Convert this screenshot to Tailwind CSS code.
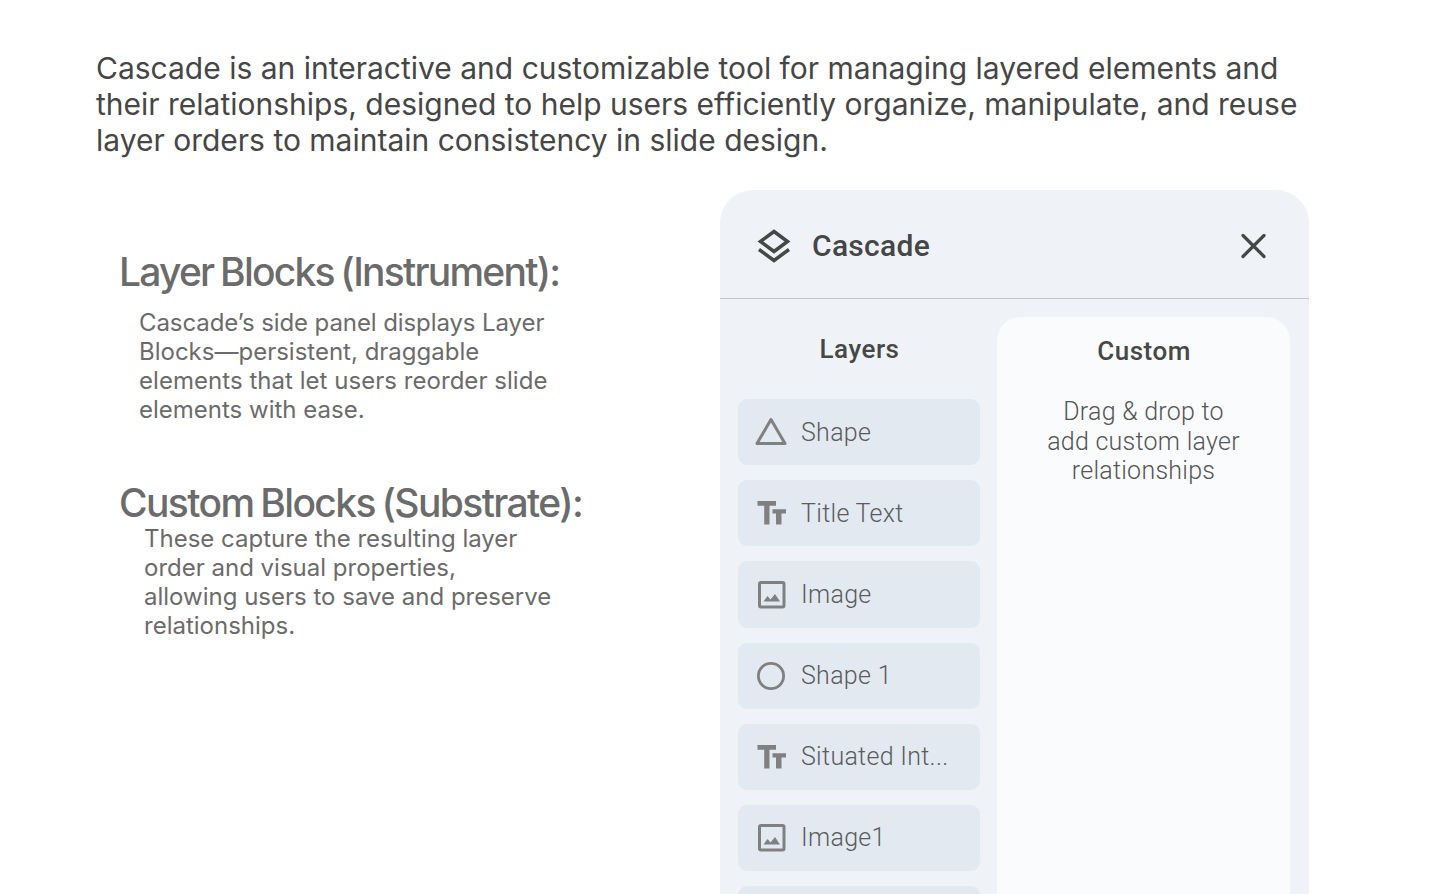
<!DOCTYPE html>
<html lang="en">
<head>
<meta charset="utf-8">
<title>Cascade</title>
<script src="https://cdn.jsdelivr.net/npm/@tailwindcss/browser@4"></script>
</head>
<body class="h-[894px] overflow-hidden bg-white font-['Inter',sans-serif]">
<svg class="hidden">
  <symbol id="tt" viewBox="0 0 30 24"><path fill="#808080" d="M0.500 0H19V4.800H12.500V23.500H7.200V4.800H0.500ZM15.500 8.200H29V12.500H24.500V23.500H19V12.500H15.500Z"/></symbol>
  <symbol id="img" viewBox="0 0 28 28"><rect x="1.500" y="1.500" width="24.500" height="24.500" rx="1.500" fill="none" stroke="#808080" stroke-width="3"/><path fill="#808080" d="M5.500 20.500L9.500 15L12.500 18.500L17 13L22 20.500Z"/></symbol>
</svg>
<main class="flex flex-col">
  <p class="mt-[50px] ml-24 whitespace-nowrap text-[30px] leading-9 text-[#464646]">Cascade is an interactive and customizable tool for managing layered elements and<br>their relationships, designed to help users efficiently organize, manipulate, and reuse<br>layer orders to maintain consistency in slide design.</p>
  <div class="mt-[32px] flex whitespace-nowrap">
    <section class="w-[720px] shrink-0 pt-[57px] pl-[120px] text-[#6b6b6b]">
      <h2 class="-ml-[1px] text-[39px] leading-[50px] font-medium tracking-[-1.770px] [word-spacing:-2px]">Layer Blocks (Instrument):</h2>
      <p class="mt-[11px] ml-[19px] text-2xl leading-[29px]"><span class="tracking-[-0.090px]">Cascade’s side panel displays Layer</span><br>Blocks—persistent, draggable<br><span class="tracking-[0.040px]">elements that let users reorder slide</span><br>elements with ease.</p>
      <h2 class="-ml-[1px] mt-[54px] text-[39px] leading-[50px] font-medium tracking-[-1.620px] [word-spacing:-2px]">Custom Blocks (Substrate):</h2>
      <p class="-mt-[4px] ml-[24px] text-2xl leading-[29px]">These capture the resulting layer<br>order and visual properties,<br>allowing users to save and preserve<br>relationships.</p>
    </section>
    <aside class="h-[704px] w-[589px] overflow-hidden rounded-t-[33px] bg-[#eff3f8] font-['Roboto',sans-serif]">
      <header class="flex h-[109px] items-center border-b border-[#c4c6c8] pt-[3px] pr-[42px] pl-[37px] text-[#464646]">
        <svg class="h-9 w-[34px]" viewBox="0 0 34 36" fill="none" stroke="#464846" stroke-width="3.500"><path d="M3.500 13.500L17 3.500L30.500 13.500L17 23.500Z"/><path d="M2 21.500L17 32.500L32 21.500"/></svg>
        <h1 class="ml-[21px] text-[30px] font-medium tracking-[0.3px]">Cascade</h1>
        <svg class="ml-auto size-[26px]" viewBox="0 0 26 26" fill="none" stroke="#464846" stroke-width="3.200" stroke-linecap="round"><path d="M2 2.500L23 23.500M23 2.500L2 23.500"/></svg>
      </header>
      <div class="flex">
        <div class="ml-[18px] w-[242px]">
          <h3 class="mt-[34px] h-8 pl-px text-center text-[26px] leading-8 font-medium tracking-[0.5px] text-[#464846]">Layers</h3>
          <ul class="mt-[34px] flex flex-col gap-[14.900px] text-[25px] font-light tracking-[0.3px] text-[#5c5c5c]">
            <li class="flex h-[66.300px] shrink-0 items-center rounded-[9px] bg-[#e2e9f1] pl-[17px]"><svg class="h-[30px] w-8" viewBox="0 0 32 30" fill="none" stroke="#808080" stroke-width="3" stroke-linejoin="round"><path d="M16 2.500L30 26.500H2Z"/></svg><span class="ml-[14px] pt-[0.800px]">Shape</span></li>
            <li class="flex h-[66.300px] shrink-0 items-center rounded-[9px] bg-[#e2e9f1] pl-[19px]"><svg class="h-6 w-[30px]"><use href="#tt"/></svg><span class="ml-[14px] pt-[0.500px]">Title Text</span></li>
            <li class="flex h-[66.300px] shrink-0 items-center rounded-[9px] bg-[#e2e9f1] pl-[20px]"><svg class="size-7"><use href="#img"/></svg><span class="ml-[15px]">Image</span></li>
            <li class="flex h-[66.300px] shrink-0 items-center rounded-[9px] bg-[#e2e9f1] pl-[19px]"><svg class="size-7" viewBox="0 0 28 28"><circle cx="14" cy="14" r="12.600" fill="none" stroke="#808080" stroke-width="2.800"/></svg><span class="ml-4">Shape 1</span></li>
            <li class="flex h-[66.300px] shrink-0 items-center rounded-[9px] bg-[#e2e9f1] pl-[19px]"><svg class="h-6 w-[30px]"><use href="#tt"/></svg><span class="ml-[14px]">Situated Int...</span></li>
            <li class="flex h-[66.300px] shrink-0 items-center rounded-[9px] bg-[#e2e9f1] pl-[20px]"><svg class="size-7"><use href="#img"/></svg><span class="ml-[15px]">Image1</span></li>
            <li class="h-[66.300px] shrink-0 rounded-[9px] bg-[#e2e9f1]"></li>
          </ul>
        </div>
        <div class="mt-[18px] ml-[17px] h-[700px] w-[293px] rounded-t-[24px] bg-[#fafbfd] text-center">
          <h3 class="mt-[18px] pl-px text-[26px] leading-8 font-medium tracking-[0.5px] text-[#464846]">Custom</h3>
          <p class="mt-[30.300px] text-[25px] leading-[29.400px] font-light tracking-[0.260px] text-[#555]">Drag &amp; drop to<br>add custom layer<br>relationships</p>
        </div>
      </div>
    </aside>
  </div>
</main>
</body>
</html>
